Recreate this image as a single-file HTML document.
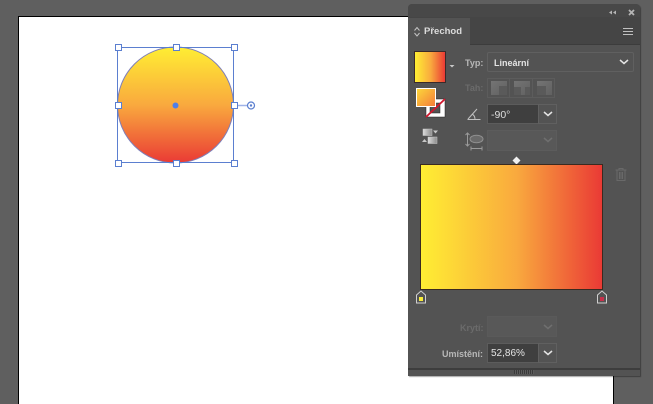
<!DOCTYPE html>
<html><head><meta charset="utf-8">
<style>
html,body{margin:0;padding:0;width:653px;height:404px;overflow:hidden;background:#5f5f5f;font-family:"Liberation Sans",sans-serif}
#r{position:absolute;left:0;top:0;width:653px;height:404px;overflow:hidden;background:#5f5f5f}
#r div,#r svg{position:absolute;box-sizing:border-box}
.t{white-space:nowrap;font-size:9.5px;font-weight:bold;line-height:12px}
.dim{color:#6b6b6b}
.lab{color:#b8b8b8}
.box{border:1px solid #606060;background:#535353}
.h{width:7px;height:7px;background:#fff;border:1px solid #5b7fd0}
</style></head><body><div id="r">
<div style="left:18px;top:16px;width:596px;height:388px;background:#fff;border:1px solid #000;border-width:1px 1px 0 1px"></div>

<!-- selected circle -->
<svg style="left:100px;top:30px" width="170" height="145" viewBox="100 30 170 145">
<defs><linearGradient id="c" x1="0" y1="0" x2="0" y2="1"><stop offset="0" stop-color="#ffee33"/><stop offset=".5" stop-color="#f9a93e"/><stop offset="1" stop-color="#ea3a35"/></linearGradient></defs>
<circle cx="175.500" cy="105" r="58" fill="url(#c)" stroke="#7f7fb8" stroke-width="1"/>
<rect x="117.500" y="47.500" width="116" height="115" fill="none" stroke="#5b7fd0" stroke-width="1"/>
<path d="M234 105.500H247" stroke="#9fb3e8" stroke-width="1.500"/>
<circle cx="251" cy="105.500" r="3.500" fill="#fff" stroke="#5b7fd0" stroke-width="1.200"/>
<circle cx="251" cy="105.500" r="1.200" fill="#5b7fd0"/>
<circle cx="175.500" cy="105.500" r="3" fill="#4f7fe8"/>
</svg>
<div class="h" style="left:115px;top:44px"></div>
<div class="h" style="left:173px;top:44px"></div>
<div class="h" style="left:231px;top:44px"></div>
<div class="h" style="left:115px;top:102px"></div>
<div class="h" style="left:231px;top:102px"></div>
<div class="h" style="left:115px;top:160px"></div>
<div class="h" style="left:173px;top:160px"></div>
<div class="h" style="left:231px;top:160px"></div>

<!-- panel -->
<div style="left:408px;top:4px;width:232px;height:372px;background:#535353;border-radius:4px 4px 0 0;box-shadow:1px 1px 1px rgba(0,0,0,.35)"></div>
<div style="left:408px;top:4px;width:232px;height:13px;background:#484848;border-radius:4px 4px 0 0"></div>
<div style="left:408px;top:17px;width:232px;height:28px;background:#454545;border-bottom:1px solid #3c3c3c"></div>
<div style="left:408px;top:18px;width:62px;height:28px;background:#535353"></div>
<svg style="left:408px;top:4px" width="232" height="42" viewBox="408 4 232 42">
<path d="M612 10.500l-3 2 3 2zM616 10.500l-3 2 3 2z" fill="#b5b5b5"/>
<path d="M629 10l5 5M634 10l-5 5" stroke="#b5b5b5" stroke-width="1.800"/>
<path d="M414.500 30.500l2.500-3 2.500 3M414.500 33l2.500 3 2.500-3" fill="none" stroke="#c4c4c4" stroke-width="1"/>
<path d="M623 28.500h10M623 31.500h10M623 34.500h10" stroke="#c0c0c0" stroke-width="1"/>
</svg>
<div class="t" style="left:424px;top:26px;color:#dcdcdc;font-size:9.500px">Přechod</div>

<!-- swatch -->
<div style="left:414px;top:51px;width:32px;height:32px;border:1px solid #3a2a2a;background:linear-gradient(90deg,#ffee33,#f9a93e 53%,#ea3a35)"></div>
<svg style="left:408px;top:45px" width="70" height="110" viewBox="408 45 70 110">
<path d="M449.500 65h5l-2.500 2.500z" fill="#c8c8c8"/>
<rect x="426" y="99" width="19" height="18" fill="#fff" stroke="#222" stroke-width=".5"/>
<rect x="430" y="103" width="10" height="10" fill="#535353" stroke="#222" stroke-width=".5"/>
<path d="M426 117L445 99" stroke="#d2152c" stroke-width="1.800"/>
</svg>
<div style="left:416px;top:88px;width:20px;height:19px;border:1px solid #fff;background:linear-gradient(135deg,#fcd63a,#f57e3a)"></div>
<svg style="left:420px;top:127px" width="20" height="20" viewBox="0 0 20 20">
<defs><linearGradient id="g" x1="0" y1="0" x2="1" y2="0"><stop offset="0" stop-color="#dcdcdc"/><stop offset="1" stop-color="#8a8a8a"/></linearGradient></defs>
<rect x="3" y="2" width="9" height="6.500" fill="url(#g)" stroke="#ccc" stroke-width=".5"/>
<path d="M13 3.500h5l-2.500 3z" fill="#c8c8c8"/>
<rect x="8" y="10" width="9" height="6.500" fill="url(#g)" stroke="#ccc" stroke-width=".5"/>
<path d="M2 15h5l-2.500-3z" fill="#c8c8c8"/>
</svg>

<!-- Typ -->
<div class="t lab" style="left:465px;top:57px;font-size:9px">Typ:</div>
<div class="box" style="left:487px;top:52px;width:147px;height:20px;border-radius:2px"></div>
<div class="t" style="left:494px;top:57px;color:#e4e4e4;font-size:9px">Lineární</div>
<svg style="left:618px;top:57px" width="12" height="10"><path d="M2 3l4 3.500L10 3" fill="none" stroke="#e4e4e4" stroke-width="1.500"/></svg>

<!-- Tah -->
<div class="t dim" style="left:465px;top:82px;font-size:9px">Tah:</div>
<div style="left:487px;top:78px;width:68px;height:20px;border:1px solid #5c5c5c"></div>
<div style="left:509px;top:78px;width:1px;height:20px;background:#5c5c5c"></div>
<div style="left:532px;top:78px;width:1px;height:20px;background:#5c5c5c"></div>
<svg style="left:487px;top:78px" width="68" height="20">
<defs><linearGradient id="s" x1="0" y1="0" x2="1" y2="1"><stop offset="0" stop-color="#747474"/><stop offset="1" stop-color="#616161"/></linearGradient></defs>
<rect x="4" y="3" width="16" height="14" fill="#5a5a5a"/>
<path d="M4 3h16v5h-8v9h-8z" fill="url(#s)"/>
<rect x="27" y="3" width="16" height="14" fill="#5a5a5a"/>
<path d="M27 3h16v6h-5v8h-4v-8h-7z" fill="url(#s)"/>
<rect x="50" y="3" width="15" height="14" fill="#5a5a5a"/>
<path d="M50 3h15v14h-6v-9h-9z" fill="url(#s)"/>
</svg>

<!-- angle -->
<svg style="left:465px;top:104px" width="18" height="20"><path d="M2.500 15.500h13M3 15L12 5M10 15.500c0-3-1-4.500-3-5.500" fill="none" stroke="#c0c0c0" stroke-width="1"/></svg>
<div style="left:487px;top:104px;width:52px;height:20px;background:#3f3f3f;border:1px solid #5c5c5c"></div>
<div class="box" style="left:538px;top:104px;width:19px;height:20px"></div>
<div class="t" style="left:491px;top:109px;color:#dedede;font-weight:normal;font-size:10.500px">-90°</div>
<svg style="left:542px;top:109px" width="12" height="10"><path d="M2 3l4 3.500L10 3" fill="none" stroke="#e4e4e4" stroke-width="1.500"/></svg>

<!-- aspect -->
<svg style="left:465px;top:131px" width="20" height="20"><ellipse cx="11.500" cy="8" rx="6.500" ry="3.800" fill="#6a6a6a" stroke="#8f8f8f"/><path d="M2.500 2v13M.5 4l2-2 2 2M.5 13l2 2 2-2M6 17.500h11M6 15.500v4M17 15.500v4" fill="none" stroke="#9a9a9a" stroke-width="1"/></svg>
<div style="left:487px;top:130px;width:70px;height:21px;background:#585858;border:1px solid #5c5c5c"></div>
<svg style="left:542px;top:135px" width="12" height="10"><path d="M2 3l4 3.500L10 3" fill="none" stroke="#6f6f6f" stroke-width="1.500"/></svg>

<!-- midpoint diamond -->
<svg style="left:511px;top:155px" width="11" height="11"><path d="M5.500 1.500l4 4-4 4-4-4z" fill="#f0f0f0"/></svg>

<!-- trash -->
<svg style="left:614px;top:167px" width="15" height="15"><path d="M1.500 3h11M5 3V1.500h4V3M3 3v10.500h8V3M5.500 5v7M7 5v7M8.500 5v7" fill="none" stroke="#696969" stroke-width="1"/></svg>

<!-- gradient bar -->
<div style="left:420px;top:164px;width:183px;height:126px;border:1px solid #3a2a20;background:linear-gradient(90deg,#ffee33,#f9a93e 53%,#ea3a35)"></div>

<!-- stops -->
<svg style="left:415px;top:289px" width="13" height="16"><path d="M1.500 6l4.500-4 4.500 4v8h-9z" fill="#535353" stroke="#cfcfcf" stroke-width="1"/><rect x="4" y="8" width="4" height="4" fill="#f8ec38"/></svg>
<svg style="left:596px;top:289px" width="13" height="16"><path d="M1.500 6l4.500-4 4.500 4v8h-9z" fill="#535353" stroke="#cfcfcf" stroke-width="1"/><rect x="4" y="8" width="4" height="4" fill="#c8304a"/></svg>

<!-- Krytí -->
<div class="t dim" style="left:460px;top:322px;font-size:9px">Krytí:</div>
<div style="left:487px;top:316px;width:70px;height:21px;background:#585858;border:1px solid #5a5a5a"></div>
<svg style="left:542px;top:322px" width="12" height="10"><path d="M2 3l4 3.500L10 3" fill="none" stroke="#6f6f6f" stroke-width="1.500"/></svg>

<!-- Umístění -->
<div class="t lab" style="left:442px;top:348px;font-size:9px">Umístění:</div>
<div style="left:487px;top:343px;width:52px;height:20px;background:#3f3f3f;border:1px solid #5c5c5c"></div>
<div class="box" style="left:538px;top:343px;width:19px;height:20px"></div>
<div class="t" style="left:491px;top:348px;color:#e4e4e4;font-weight:normal;font-size:10px">52,86%</div>
<svg style="left:542px;top:348px" width="12" height="10"><path d="M2 3l4 3.500L10 3" fill="none" stroke="#e4e4e4" stroke-width="1.500"/></svg>

<!-- bottom -->
<div style="left:408px;top:368px;width:232px;height:2px;background:#3d3d3d"></div>
<div style="left:514px;top:370px;width:20px;height:4px;background:repeating-linear-gradient(90deg,#3a3a3a 0 1px,#5c5c5c 1px 2px)"></div>
</div></body></html>
